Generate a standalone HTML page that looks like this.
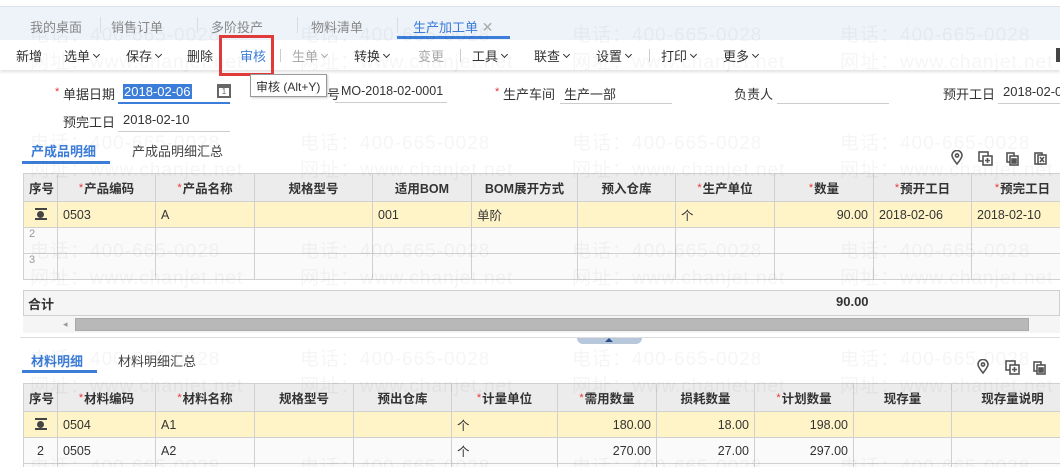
<!DOCTYPE html>
<html><head><meta charset="utf-8"><style>
*{margin:0;padding:0;box-sizing:border-box}
html,body{width:1060px;height:467px;overflow:hidden}
body{background:#fff;font-family:"Liberation Sans","Noto Sans CJK SC",sans-serif;font-size:13px;color:#333;position:relative}
.a{position:absolute;white-space:nowrap}
.top{left:0;top:6px;width:1060px;height:34px;background:#eef3fa;border-top:1px solid #dde3ea}
.tab{top:17px;font-size:13px;color:#888}
.tb{left:0;top:40px;width:1060px;height:30px;background:#fff;box-shadow:0 2px 3px rgba(0,0,0,.12)}
.ti{top:46px;font-size:13px;color:#333}
.dis{color:#aaa}
.chev{display:inline-block;width:5px;height:5px;border-right:1.5px solid currentColor;border-bottom:1.5px solid currentColor;transform:rotate(45deg);margin-left:4px;vertical-align:4px}
.sep{top:49px;width:1px;height:13px;background:#ccc}
.lbl{font-size:13px;color:#333}
.red{color:#e33;font-size:11px}
.ul{height:1px;background:#ccc}
table{border-collapse:collapse;position:absolute;table-layout:fixed;font-size:12.5px}
td,th{border:1px solid #d0d0d0;height:26px;padding:0 5px;overflow:hidden;white-space:nowrap}
th{background:#ececec;font-weight:bold;color:#333;height:28px;text-align:center}
td.r{text-align:right}
tr.y td{background:#fff4c8}
tr.g td{background:#fafafa}
th .s{color:#e33;font-weight:normal;font-size:11px;vertical-align:2px;margin-right:1px}
.wm{position:absolute;font-size:19px;color:rgba(0,0,0,.04);white-space:nowrap;letter-spacing:1px;pointer-events:none}
.gear{display:inline-block;width:12px;height:12px;border-top:2px solid #444;border-bottom:2px solid #444;position:relative;vertical-align:-1px}
.gear:after{content:"";position:absolute;left:2px;top:1px;width:7px;height:7px;border-radius:50%;background:#444}
</style></head><body>
<div class="a top"></div>
<div class="a tab" style="left:30px">我的桌面</div>
<div class="a tab" style="left:111px">销售订单</div>
<div class="a" style="left:100px;top:17px;width:1px;height:16px;background:#d8dde4"></div>
<div class="a" style="left:197px;top:17px;width:1px;height:16px;background:#d8dde4"></div>
<div class="a tab" style="left:211px">多阶投产</div>
<div class="a" style="left:297px;top:17px;width:1px;height:16px;background:#d8dde4"></div>
<div class="a tab" style="left:311px">物料清单</div>
<div class="a" style="left:397px;top:17px;width:1px;height:16px;background:#d8dde4"></div>
<div class="a tab" style="left:413px;color:#3b7dd8">生产加工单 <span style="color:#aaa;font-size:14px">✕</span></div>
<div class="a" style="left:397px;top:36px;width:113px;height:3px;background:#3b7dd8"></div>

<div class="a tb"></div>
<div class="a ti" style="left:16px">新增</div>
<div class="a ti" style="left:64px">选单<span class="chev"></span></div>
<div class="a ti" style="left:126px">保存<span class="chev"></span></div>
<div class="a ti" style="left:187px">删除</div>
<div class="a ti" style="left:240px;color:#3b7dd8">审核</div>
<div class="a sep" style="left:280px"></div>
<div class="a ti dis" style="left:292px">生单<span class="chev"></span></div>
<div class="a ti" style="left:354px">转换<span class="chev"></span></div>
<div class="a ti dis" style="left:418px">变更</div>
<div class="a sep" style="left:460px"></div>
<div class="a ti" style="left:472px">工具<span class="chev"></span></div>
<div class="a ti" style="left:534px">联查<span class="chev"></span></div>
<div class="a ti" style="left:596px">设置<span class="chev"></span></div>
<div class="a sep" style="left:649px"></div>
<div class="a ti" style="left:661px">打印<span class="chev"></span></div>
<div class="a ti" style="left:723px">更多<span class="chev"></span></div>
<div class="a" style="left:1056px;top:48px;width:4px;height:14px;background:#444"></div>
<div class="a" style="left:219px;top:35px;width:55px;height:41px;border:3px solid #e03b3b"></div>

<div class="a red" style="left:55px;top:86px">*</div>
<div class="a lbl" style="left:63px;top:84px">单据日期</div>
<div class="a" style="left:123px;top:84px;background:#3b7dd8;color:#fff;padding:0 1px">2018-02-06</div>
<div class="a" style="left:118px;top:102px;width:112px;height:2px;background:#3b7dd8"></div>
<div class="a" style="left:217px;top:84px;width:14px;height:14px;border:2px solid #666;border-top-width:4px;font-size:8px;text-align:center;line-height:8px;color:#666">1</div>
<div class="a" style="left:250px;top:74px;width:77px;height:23px;border:1px solid #999;background:#fff;font-size:12px;padding:3px 5px;box-shadow:1px 1px 2px rgba(0,0,0,.2)">审核 (Alt+Y)</div>
<div class="a lbl" style="left:327px;top:84px">号</div>
<div class="a lbl" style="left:341px;top:84px;font-size:12.5px">MO-2018-02-0001</div>
<div class="a ul" style="left:335px;top:102px;width:112px"></div>
<div class="a red" style="left:495px;top:86px">*</div>
<div class="a lbl" style="left:503px;top:84px">生产车间</div>
<div class="a lbl" style="left:564px;top:84px">生产一部</div>
<div class="a ul" style="left:560px;top:103px;width:112px"></div>
<div class="a lbl" style="left:734px;top:84px">负责人</div>
<div class="a ul" style="left:777px;top:103px;width:112px"></div>
<div class="a lbl" style="left:943px;top:84px">预开工日</div>
<div class="a lbl" style="left:1003px;top:84px">2018-02-06</div>
<div class="a ul" style="left:998px;top:103px;width:62px"></div>
<div class="a lbl" style="left:63px;top:112px">预完工日</div>
<div class="a lbl" style="left:123px;top:112px">2018-02-10</div>
<div class="a ul" style="left:118px;top:131px;width:112px"></div>

<div class="a" style="left:31px;top:141px;color:#3b7dd8;font-weight:bold">产成品明细</div>
<div class="a" style="left:132px;top:141px;color:#444">产成品明细汇总</div>
<div class="a" style="left:22px;top:161px;width:88px;height:3px;background:#3b7dd8"></div>
<svg class="a" style="left:950px;top:150px" width="100" height="16" viewBox="0 0 100 16" fill="none" stroke="#555" stroke-width="1.6">
<path d="M7 14 C3 9 2 7 2 5.5 A5 5 0 0 1 12 5.5 C12 7 11 9 7 14Z"/><circle cx="7" cy="5.5" r="1.6"/>
<rect x="29" y="2" width="9" height="9"/><rect x="33" y="6" width="9" height="9" fill="#fff"/><path d="M37.5 8v5M35 10.5h5"/>
<rect x="57" y="3" width="7" height="9"/><rect x="60" y="6" width="8" height="9" fill="#fff"/><rect x="62" y="9" width="4" height="4" fill="#555"/>
<rect x="85" y="3" width="7" height="11"/><rect x="88" y="5" width="8" height="9" fill="#fff"/><path d="M90 7l4 5M94 7l-4 5"/>
</svg>

<table style="left:23px;top:173px;width:1050px">
<colgroup><col style="width:34px"><col style="width:98px"><col style="width:99px"><col style="width:118px"><col style="width:99px"><col style="width:106px"><col style="width:98px"><col style="width:99px"><col style="width:99px"><col style="width:98px"><col style="width:102px"></colgroup>
<tr><th>序号</th><th><span class="s">*</span>产品编码</th><th><span class="s">*</span>产品名称</th><th>规格型号</th><th>适用BOM</th><th>BOM展开方式</th><th>预入仓库</th><th><span class="s">*</span>生产单位</th><th><span class="s">*</span>数量</th><th><span class="s">*</span>预开工日</th><th><span class="s">*</span>预完工日</th></tr>
<tr class="y"><td style="text-align:center"><span class="gear"></span></td><td>0503</td><td>A</td><td></td><td>001</td><td>单阶</td><td></td><td>个</td><td class="r">90.00</td><td>2018-02-06</td><td>2018-02-10</td></tr>
<tr class="g"><td style="font-size:11px;color:#999;vertical-align:top">2</td><td></td><td></td><td></td><td></td><td></td><td></td><td></td><td></td><td></td><td></td></tr>
<tr class="g"><td style="font-size:11px;color:#999;vertical-align:top">3</td><td></td><td></td><td></td><td></td><td></td><td></td><td></td><td></td><td></td><td></td></tr>
</table>
<div class="a" style="left:23px;top:290px;width:1037px;height:26px;background:#f5f5f5;border:1px solid #d0d0d0"></div>
<div class="a" style="left:28px;top:294px;font-weight:bold;color:#333">合计</div>
<div class="a" style="left:836px;top:294px;font-weight:bold;color:#333">90.00</div>
<div class="a" style="left:23px;top:316px;width:1037px;height:17px;background:#f5f5f5"></div>
<div class="a" style="left:63px;top:319px;font-size:9px;color:#999">◂</div>
<div class="a" style="left:75px;top:318px;width:954px;height:13px;background:#b8b8b8;border:1px solid #aaa"></div>
<div class="a" style="left:20px;top:337px;width:1040px;height:1px;background:#ddd"></div>
<div class="a" style="left:577px;top:338px;width:65px;height:6px;background:#b8c8dc;border-radius:0 0 6px 6px"></div>
<div class="a" style="left:605px;top:338px;width:0;height:0;border-left:4px solid transparent;border-right:4px solid transparent;border-bottom:4px solid #2a4f88"></div>

<div class="a" style="left:31px;top:351px;color:#3b7dd8;font-weight:bold">材料明细</div>
<div class="a" style="left:118px;top:351px;color:#444">材料明细汇总</div>
<div class="a" style="left:22px;top:370px;width:75px;height:3px;background:#3b7dd8"></div>
<svg class="a" style="left:976px;top:359px" width="80" height="16" viewBox="0 0 80 16" fill="none" stroke="#555" stroke-width="1.6">
<path d="M7 14 C3 9 2 7 2 5.5 A5 5 0 0 1 12 5.5 C12 7 11 9 7 14Z"/><circle cx="7" cy="5.5" r="1.6"/>
<rect x="30" y="2" width="9" height="9"/><rect x="34" y="6" width="9" height="9" fill="#fff"/><path d="M38.5 8v5M36 10.5h5"/>
<rect x="58" y="3" width="7" height="9"/><rect x="61" y="6" width="8" height="9" fill="#fff"/><rect x="63" y="9" width="4" height="4" fill="#555"/>
</svg>
<table style="left:23px;top:383px;width:1050px">
<colgroup><col style="width:34px"><col style="width:98px"><col style="width:99px"><col style="width:99px"><col style="width:98px"><col style="width:106px"><col style="width:99px"><col style="width:98px"><col style="width:99px"><col style="width:98px"><col style="width:122px"></colgroup>
<tr><th>序号</th><th><span class="s">*</span>材料编码</th><th><span class="s">*</span>材料名称</th><th>规格型号</th><th>预出仓库</th><th><span class="s">*</span>计量单位</th><th><span class="s">*</span>需用数量</th><th>损耗数量</th><th><span class="s">*</span>计划数量</th><th>现存量</th><th>现存量说明</th></tr>
<tr class="y"><td style="text-align:center"><span class="gear"></span></td><td>0504</td><td>A1</td><td></td><td></td><td>个</td><td class="r">180.00</td><td class="r">18.00</td><td class="r">198.00</td><td></td><td></td></tr>
<tr class="g"><td style="text-align:center">2</td><td>0505</td><td>A2</td><td></td><td></td><td>个</td><td class="r">270.00</td><td class="r">27.00</td><td class="r">297.00</td><td></td><td></td></tr>
<tr class="g"><td></td><td></td><td></td><td></td><td></td><td></td><td></td><td></td><td></td><td></td><td></td></tr>
</table>

<div class="wm" style="left:30px;top:20px">电话：400-665-0028</div><div class="wm" style="left:300px;top:20px">电话：400-665-0028</div><div class="wm" style="left:572px;top:20px">电话：400-665-0028</div><div class="wm" style="left:840px;top:20px">电话：400-665-0028</div>
<div class="wm" style="left:30px;top:47px">网址：www.chanjet.net</div><div class="wm" style="left:300px;top:47px">网址：www.chanjet.net</div><div class="wm" style="left:572px;top:47px">网址：www.chanjet.net</div><div class="wm" style="left:840px;top:47px">网址：www.chanjet.net</div>
<div class="wm" style="left:30px;top:128px">电话：400-665-0028</div><div class="wm" style="left:300px;top:128px">电话：400-665-0028</div><div class="wm" style="left:572px;top:128px">电话：400-665-0028</div><div class="wm" style="left:840px;top:128px">电话：400-665-0028</div>
<div class="wm" style="left:30px;top:155px">网址：www.chanjet.net</div><div class="wm" style="left:300px;top:155px">网址：www.chanjet.net</div><div class="wm" style="left:572px;top:155px">网址：www.chanjet.net</div><div class="wm" style="left:840px;top:155px">网址：www.chanjet.net</div>
<div class="wm" style="left:30px;top:236px">电话：400-665-0028</div><div class="wm" style="left:300px;top:236px">电话：400-665-0028</div><div class="wm" style="left:572px;top:236px">电话：400-665-0028</div><div class="wm" style="left:840px;top:236px">电话：400-665-0028</div>
<div class="wm" style="left:30px;top:263px">网址：www.chanjet.net</div><div class="wm" style="left:300px;top:263px">网址：www.chanjet.net</div><div class="wm" style="left:572px;top:263px">网址：www.chanjet.net</div><div class="wm" style="left:840px;top:263px">网址：www.chanjet.net</div>
<div class="wm" style="left:30px;top:344px">电话：400-665-0028</div><div class="wm" style="left:300px;top:344px">电话：400-665-0028</div><div class="wm" style="left:572px;top:344px">电话：400-665-0028</div><div class="wm" style="left:840px;top:344px">电话：400-665-0028</div>
<div class="wm" style="left:30px;top:371px">网址：www.chanjet.net</div><div class="wm" style="left:300px;top:371px">网址：www.chanjet.net</div><div class="wm" style="left:572px;top:371px">网址：www.chanjet.net</div><div class="wm" style="left:840px;top:371px">网址：www.chanjet.net</div>
<div class="wm" style="left:30px;top:452px">电话：400-665-0028</div><div class="wm" style="left:300px;top:452px">电话：400-665-0028</div><div class="wm" style="left:572px;top:452px">电话：400-665-0028</div><div class="wm" style="left:840px;top:452px">电话：400-665-0028</div>
</body></html>
